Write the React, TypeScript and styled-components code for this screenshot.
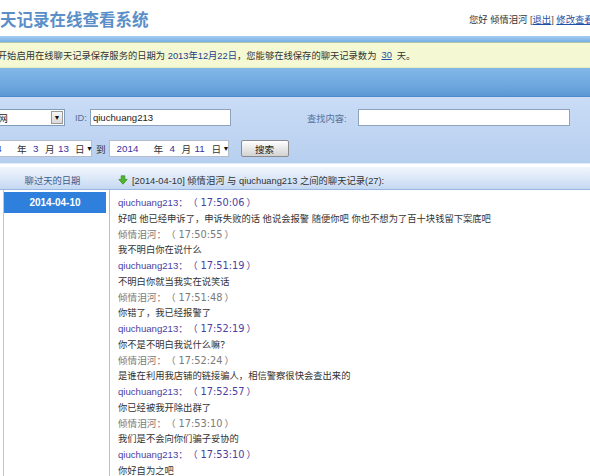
import * as React from "react";
import styled, { createGlobalStyle } from "styled-components";

const GlobalStyle = createGlobalStyle`
  html, body {
    margin: 0;
    padding: 0;
    background: #ffffff;
  }
  body {
    font-family: "Liberation Sans", "Noto Sans CJK SC", sans-serif;
    font-size: 9.3px;
    color: #333333;
    text-spacing-trim: space-all;
  }
`;

const FONT = `"Liberation Sans", "Noto Sans CJK SC", sans-serif`;

const Viewport = styled.div`
  width: 590px;
  height: 476px;
  overflow: hidden;
  background: #ffffff;
`;

// the shot is a crop of a wider page, so the sheet starts left of the window
const Sheet = styled.div`
  margin-left: -30px;
  width: 680px;
`;

const Header = styled.header`
  height: 36px;
  display: grid;
  grid-template-columns: 499px auto;
  align-items: center;
`;

const Title = styled.h1`
  margin: 0;
  padding: 2px 0 0 13.5px;
  font-family: "Noto Sans CJK SC", sans-serif;
  font-size: 16.5px;
  font-weight: 700;
  line-height: 20px;
  color: #5b8fc8;
  white-space: nowrap;
`;

const UserBar = styled.div`
  padding-top: 2px;
  white-space: nowrap;
  color: #333333;
`;

const Link = styled.a`
  color: #1f4fa6;
  text-decoration: underline;
  cursor: pointer;
`;

const Bracket = styled.span`
  color: #555555;
`;

const TopStrip = styled.div`
  height: 6px;
  background: linear-gradient(#a7cdf1, #78afe3);
`;

const Notice = styled.div`
  height: 24px;
  display: flex;
  align-items: center;
  padding-left: 18.5px;
  background: #f4f9d3;
  border-top: 1px solid #aec3b4;
  border-bottom: 1px solid #e3ecbf;
  white-space: nowrap;
`;

const Strong = styled.span`
  color: #1c3c8e;
`;

const DaysLink = styled(Link)`
  margin: 0 5px;
`;

const MidStrip = styled.div`
  height: 28px;
  background: linear-gradient(#82b8e8, #6aa5dd 70%, #5b97d3);
  border-bottom: 1px solid #4e8bcc;
`;

const SearchPanel = styled.div`
  height: 54px;
  padding-top: 12px;
  display: flex;
  flex-direction: column;
  gap: 14px;
  background: linear-gradient(#cadcf6, #b7cfef);
  border-bottom: 1px solid #e3edf9;
`;

const Row = styled.div`
  height: 17px;
  display: flex;
  align-items: center;
`;

const SelectBox = styled.div<{ $w: number }>`
  width: ${(p) => p.$w}px;
  height: 17px;
  margin-left: 5px;
  box-sizing: border-box;
  display: flex;
  align-items: center;
  background: #ffffff;
  border: 1px solid #7f9db9;
`;

const SelectText = styled.span`
  flex: 1;
  padding-left: 4px;
  color: #222222;
`;

const DropButton = styled.span`
  width: 12px;
  height: 13px;
  margin-right: 1px;
  box-sizing: border-box;
  display: flex;
  align-items: center;
  justify-content: center;
  background: linear-gradient(#f6f6f6, #d9d9d9);
  border: 1px solid #9a9a9a;
  font-size: 7px;
  color: #111111;
`;

const Label = styled.span<{ $ml: number; $mr: number }>`
  margin-left: ${(p) => p.$ml}px;
  margin-right: ${(p) => p.$mr}px;
  color: #56709a;
  white-space: nowrap;
`;

const TextInput = styled.input<{ $w: number }>`
  width: ${(p) => p.$w}px;
  height: 17px;
  box-sizing: border-box;
  margin: 0;
  padding: 0 2px;
  border: 1px solid #8ea3bd;
  background: #ffffff;
  font-family: ${FONT};
  font-size: 9.6px;
  color: #222222;
  outline: none;
`;

const DateBox = styled.div<{ $ml: number }>`
  width: 120px;
  height: 17px;
  margin-left: ${(p) => p.$ml}px;
  box-sizing: border-box;
  display: flex;
  align-items: center;
  padding-left: 7px;
  background: #ffffff;
  border: 1px solid #b3bccb;
  white-space: nowrap;
`;

const DatePart = styled.span<{ $w: number; $num?: boolean }>`
  width: ${(p) => p.$w}px;
  flex: none;
  font-size: ${(p) => (p.$num ? "9.8px" : "9.6px")};
  color: ${(p) => (p.$num ? "#3b2fa3" : "#333333")};
`;

const Arrow = styled.span`
  font-size: 7px;
  color: #111111;
`;

const To = styled.span`
  margin-left: 4px;
  font-size: 9.6px;
  color: #333333;
`;

const SearchButton = styled.button`
  width: 48px;
  height: 17px;
  margin-left: 12px;
  padding: 0;
  box-sizing: border-box;
  border: 1px solid #8b8b8b;
  border-radius: 2px;
  background: linear-gradient(#ffffff, #e4e4e4 60%, #d2d2d2);
  font-family: ${FONT};
  font-size: 9.6px;
  color: #222222;
`;

const ListHeader = styled.div`
  margin-top: 3px;
  height: 23px;
  display: flex;
  align-items: center;
  padding-top: 4px;
  box-sizing: border-box;
  background: linear-gradient(#f1f6fd, #dce8f8 50%, #c4d8f2);
  border-bottom: 1px solid #98b6df;
`;

const DatesTitle = styled.div`
  width: 107px;
  margin-left: 33px;
  padding-right: 8px;
  box-sizing: border-box;
  text-align: center;
  color: #3d5c8c;
`;

const ChatTitle = styled.div`
  display: flex;
  align-items: center;
  gap: 4px;
  padding-left: 8px;
  color: #333333;
  white-space: nowrap;
`;

const Body = styled.div`
  display: flex;
  height: 300px;
`;

const DateColumn = styled.div`
  width: 107px;
  margin-left: 33px;
  box-sizing: border-box;
  padding: 2px 3px 0 0;
  border-left: 1px solid #b4c8e4;
  border-right: 1px solid #a9c1e3;
`;

const DateItem = styled.div<{ $active?: boolean }>`
  height: 21px;
  display: flex;
  align-items: center;
  justify-content: center;
  background: ${(p) => (p.$active ? "#2f80dc" : "transparent")};
  color: ${(p) => (p.$active ? "#ffffff" : "#333333")};
  font-weight: 700;
  font-size: 10px;
`;

const MessageList = styled.div`
  padding: 5px 0 0 8px;
  display: flex;
  flex-direction: column;
`;

const Sender = styled.div<{ $me: boolean }>`
  height: 15.5px;
  line-height: 15.5px;
  white-space: nowrap;
  font-size: 9.6px;
  color: ${(p) => (p.$me ? "#7a7a7a" : "#4a3ea3")};
`;

const Time = styled.span`
  padding: 0 2px 0 3px;
  font-family: "DejaVu Sans", "Noto Sans CJK SC", sans-serif;
  font-size: 9.8px;
`;

const Content = styled.div`
  height: 16px;
  line-height: 16px;
  white-space: nowrap;
  color: #333333;
`;

interface Message {
  from: string;
  time: string;
  text: string;
}

const ME = "倾情泪河";
const PEER = "qiuchuang213";

const messages: Message[] = [
  {
    from: PEER,
    time: "17:50:06",
    text: "好吧 他已经申诉了，申诉失败的话 他说会报警 随便你吧 你也不想为了百十块钱留下案底吧",
  },
  { from: ME, time: "17:50:55", text: "我不明白你在说什么" },
  { from: PEER, time: "17:51:19", text: "不明白你就当我实在说笑话" },
  { from: ME, time: "17:51:48", text: "你错了，我已经报警了" },
  { from: PEER, time: "17:52:19", text: "你不是不明白我说什么嘛？" },
  { from: ME, time: "17:52:24", text: "是谁在利用我店铺的链接骗人，相信警察很快会查出来的" },
  { from: PEER, time: "17:52:57", text: "你已经被我开除出群了" },
  { from: ME, time: "17:53:10", text: "我们是不会向你们骗子妥协的" },
  { from: PEER, time: "17:53:10", text: "你好自为之吧" },
];

const GreenArrow = () => (
  <svg width="10" height="10" viewBox="0 0 10 10">
    <path
      d="M3.2 0.8h3.6v3.6h2.4L5 9.2 0.8 4.4h2.4z"
      fill="#52b52e"
      stroke="#2f8c17"
      strokeWidth="0.7"
      strokeLinejoin="round"
    />
  </svg>
);

const DateSelect = ({
  year,
  month,
  day,
  ml,
}: {
  year: string;
  month: string;
  day: string;
  ml: number;
}) => (
  <DateBox $ml={ml}>
    <DatePart $w={37} $num>
      {year}
    </DatePart>
    <DatePart $w={16}>年</DatePart>
    <DatePart $w={12} $num>
      {month}
    </DatePart>
    <DatePart $w={13}>月</DatePart>
    <DatePart $w={17} $num>
      {day}
    </DatePart>
    <DatePart $w={11}>日</DatePart>
    <Arrow>▼</Arrow>
  </DateBox>
);

export default function App() {
  return (
    <Viewport>
      <GlobalStyle />
      <Sheet>
        <Header>
          <Title>聊天记录在线查看系统</Title>
          <UserBar>
            您好 倾情泪河 <Bracket>[</Bracket>
            <Link>退出</Link>
            <Bracket>]</Bracket> <Link>修改查看密码</Link>
          </UserBar>
        </Header>
        <TopStrip />
        <Notice>
          您开始启用在线聊天记录保存服务的日期为&nbsp;
          <Strong>2013年12月22日</Strong>，您能够在线保存的聊天记录数为
          <DaysLink>30</DaysLink>天。
        </Notice>
        <MidStrip />
        <SearchPanel>
          <Row>
            <SelectBox $w={90}>
              <SelectText>淘宝网</SelectText>
              <DropButton>▼</DropButton>
            </SelectBox>
            <Label $ml={10} $mr={3}>
              ID:
            </Label>
            <TextInput $w={141} defaultValue="qiuchuang213" />
            <Label $ml={76} $mr={11}>
              查找内容:
            </Label>
            <TextInput $w={212} defaultValue="" />
          </Row>
          <Row>
            <DateSelect year="2014" month="3" day="13" ml={2} />
            <To>到</To>
            <DateSelect year="2014" month="4" day="11" ml={3} />
            <SearchButton>搜索</SearchButton>
          </Row>
        </SearchPanel>
        <ListHeader>
          <DatesTitle>聊过天的日期</DatesTitle>
          <ChatTitle>
            <GreenArrow />
            [2014-04-10] 倾情泪河 与 qiuchuang213 之间的聊天记录(27):
          </ChatTitle>
        </ListHeader>
        <Body>
          <DateColumn>
            <DateItem $active>2014-04-10</DateItem>
          </DateColumn>
          <MessageList>
            {messages.map((m, i) => (
              <React.Fragment key={i}>
                <Sender $me={m.from === ME}>
                  {m.from}：（<Time>{m.time}</Time>）
                </Sender>
                <Content>{m.text}</Content>
              </React.Fragment>
            ))}
          </MessageList>
        </Body>
      </Sheet>
    </Viewport>
  );
}
